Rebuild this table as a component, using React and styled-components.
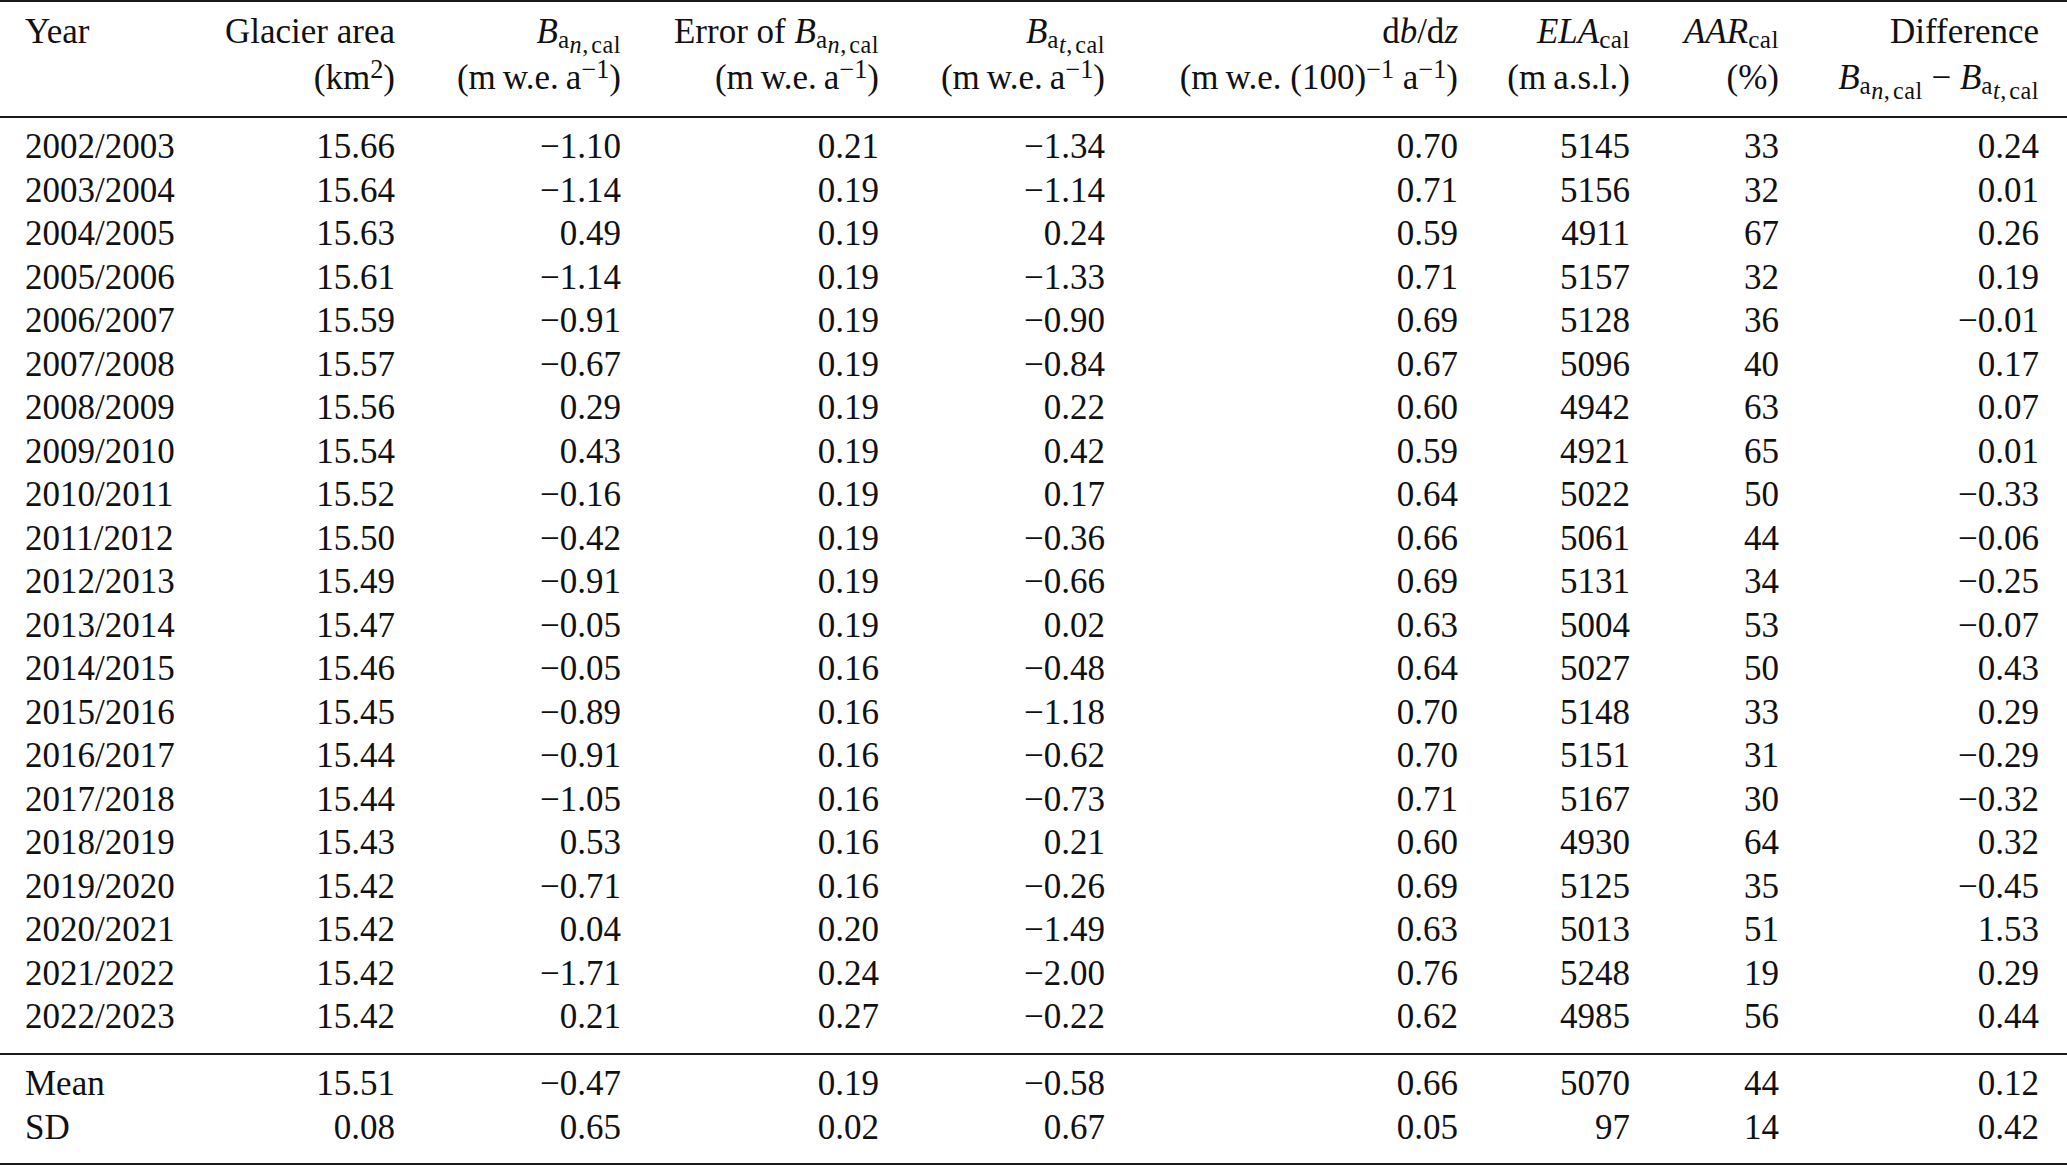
import React from "react";
import styled, { createGlobalStyle } from "styled-components";

const GlobalStyle = createGlobalStyle`
  html, body { margin: 0; padding: 0; background: #fff; }
  body { font-family: "Liberation Serif", "Times New Roman", serif; color: #111; }
`;

const COLS = "180px 190px 226px 258px 226px 353px 172px 149px 260px";

const Table = styled.div`
  width: 2067px;
  font-size: 35px;
`;

const Section = styled.div`
  border-top: ${(p) => (p.$top ? "2px solid #1a1a1a" : "none")};
  border-bottom: 2px solid #1a1a1a;
  padding: 7px 28px ${(p) => p.$padBottom}px 25px;
`;

const Row = styled.div`
  display: grid;
  grid-template-columns: ${COLS};
  line-height: ${(p) => (p.$head ? "46px" : "43.5px")};
  height: ${(p) => (p.$head ? "92px" : "43.5px")};
`;

const Cell = styled.div`
  text-align: ${(p) => (p.$left ? "left" : "right")};
  white-space: nowrap;
`;

const HeadCell = styled.div`
  display: flex;
  flex-direction: column;
  align-items: ${(p) => (p.$left ? "flex-start" : "flex-end")};
  white-space: nowrap;
`;

const Line = styled.div`
  height: 46px;
`;

const It = styled.i`
  font-style: italic;
`;

const Sub = styled.sub`
  font-size: 0.72em;
  line-height: 0;
  vertical-align: -0.2em;
  letter-spacing: 0.02em;
`;

const SubSub = styled.span`
  font-size: 0.96em;
  line-height: 0;
  vertical-align: -0.2em;
`;

const Sup = styled.sup`
  font-size: 0.75em;
  line-height: 0;
  vertical-align: 0.42em;
`;

const Ban = () => (
  <span>
    <It>B</It>
    <Sub>
      a
      <SubSub>
        <It>n</It>,{"\u200A"}cal
      </SubSub>
    </Sub>
  </span>
);

const Bat = () => (
  <span>
    <It>B</It>
    <Sub>
      a
      <SubSub>
        <It>t</It>,{"\u200A"}cal
      </SubSub>
    </Sub>
  </span>
);

const Unit = () => (
  <span>
    (m{"\u2009"}w.e.{"\u2009"}a<Sup>−1</Sup>)
  </span>
);

const rows = [
  ["2002/2003", "15.66", "−1.10", "0.21", "−1.34", "0.70", "5145", "33", "0.24"],
  ["2003/2004", "15.64", "−1.14", "0.19", "−1.14", "0.71", "5156", "32", "0.01"],
  ["2004/2005", "15.63", "0.49", "0.19", "0.24", "0.59", "4911", "67", "0.26"],
  ["2005/2006", "15.61", "−1.14", "0.19", "−1.33", "0.71", "5157", "32", "0.19"],
  ["2006/2007", "15.59", "−0.91", "0.19", "−0.90", "0.69", "5128", "36", "−0.01"],
  ["2007/2008", "15.57", "−0.67", "0.19", "−0.84", "0.67", "5096", "40", "0.17"],
  ["2008/2009", "15.56", "0.29", "0.19", "0.22", "0.60", "4942", "63", "0.07"],
  ["2009/2010", "15.54", "0.43", "0.19", "0.42", "0.59", "4921", "65", "0.01"],
  ["2010/2011", "15.52", "−0.16", "0.19", "0.17", "0.64", "5022", "50", "−0.33"],
  ["2011/2012", "15.50", "−0.42", "0.19", "−0.36", "0.66", "5061", "44", "−0.06"],
  ["2012/2013", "15.49", "−0.91", "0.19", "−0.66", "0.69", "5131", "34", "−0.25"],
  ["2013/2014", "15.47", "−0.05", "0.19", "0.02", "0.63", "5004", "53", "−0.07"],
  ["2014/2015", "15.46", "−0.05", "0.16", "−0.48", "0.64", "5027", "50", "0.43"],
  ["2015/2016", "15.45", "−0.89", "0.16", "−1.18", "0.70", "5148", "33", "0.29"],
  ["2016/2017", "15.44", "−0.91", "0.16", "−0.62", "0.70", "5151", "31", "−0.29"],
  ["2017/2018", "15.44", "−1.05", "0.16", "−0.73", "0.71", "5167", "30", "−0.32"],
  ["2018/2019", "15.43", "0.53", "0.16", "0.21", "0.60", "4930", "64", "0.32"],
  ["2019/2020", "15.42", "−0.71", "0.16", "−0.26", "0.69", "5125", "35", "−0.45"],
  ["2020/2021", "15.42", "0.04", "0.20", "−1.49", "0.63", "5013", "51", "1.53"],
  ["2021/2022", "15.42", "−1.71", "0.24", "−2.00", "0.76", "5248", "19", "0.29"],
  ["2022/2023", "15.42", "0.21", "0.27", "−0.22", "0.62", "4985", "56", "0.44"],
];

const summary = [
  ["Mean", "15.51", "−0.47", "0.19", "−0.58", "0.66", "5070", "44", "0.12"],
  ["SD", "0.08", "0.65", "0.02", "0.67", "0.05", "97", "14", "0.42"],
];

const DataRow = ({ values }) => (
  <Row>
    {values.map((v, i) => (
      <Cell key={i} $left={i === 0}>
        {v}
      </Cell>
    ))}
  </Row>
);

export default function App() {
  return (
    <>
      <GlobalStyle />
      <Table>
        <Section $top $padBottom={15}>
          <Row $head>
            <HeadCell $left>
              <Line>Year</Line>
              <Line />
            </HeadCell>
            <HeadCell>
              <Line>Glacier area</Line>
              <Line>
                (km<Sup>2</Sup>)
              </Line>
            </HeadCell>
            <HeadCell>
              <Line>
                <Ban />
              </Line>
              <Line>
                <Unit />
              </Line>
            </HeadCell>
            <HeadCell>
              <Line>
                Error of <Ban />
              </Line>
              <Line>
                <Unit />
              </Line>
            </HeadCell>
            <HeadCell>
              <Line>
                <Bat />
              </Line>
              <Line>
                <Unit />
              </Line>
            </HeadCell>
            <HeadCell>
              <Line>
                d<It>b</It>/d<It>z</It>
              </Line>
              <Line>
                (m{"\u2009"}w.e. (100)<Sup>−1</Sup> a<Sup>−1</Sup>)
              </Line>
            </HeadCell>
            <HeadCell>
              <Line>
                <It>ELA</It>
                <Sub>cal</Sub>
              </Line>
              <Line>(m{"\u2009"}a.s.l.)</Line>
            </HeadCell>
            <HeadCell>
              <Line>
                <It>AAR</It>
                <Sub>cal</Sub>
              </Line>
              <Line>(%)</Line>
            </HeadCell>
            <HeadCell>
              <Line>Difference</Line>
              <Line>
                <Ban /> − <Bat />
              </Line>
            </HeadCell>
          </Row>
        </Section>
        <Section $padBottom={14.5}>
          {rows.map((r) => (
            <DataRow key={r[0]} values={r} />
          ))}
        </Section>
        <Section $padBottom={14}>
          {summary.map((r) => (
            <DataRow key={r[0]} values={r} />
          ))}
        </Section>
      </Table>
    </>
  );
}
